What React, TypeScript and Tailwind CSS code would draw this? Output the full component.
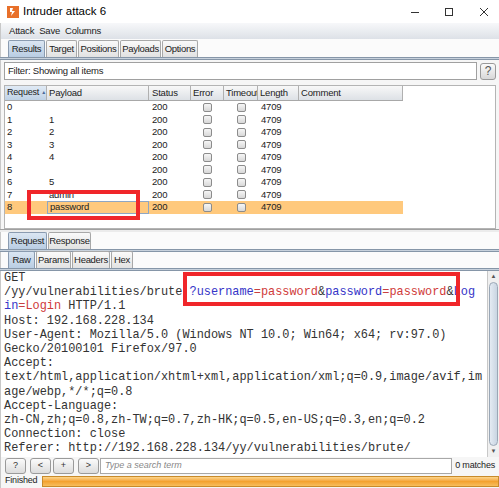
import React from 'react';

const ui = { fontFamily: '"Liberation Sans", Arial, sans-serif' };
const mono = { fontFamily: '"Liberation Mono", "Courier New", monospace' };

const rows = [
  { n: '0', p: '' },
  { n: '1', p: '1' },
  { n: '2', p: '2' },
  { n: '3', p: '3' },
  { n: '4', p: '4' },
  { n: '5', p: '' },
  { n: '6', p: '5' },
  { n: '7', p: 'admin' },
  { n: '8', p: 'password' },
];

function Tab({ label, active, w }: { label: string; active?: boolean; w: string }) {
  return (
    <div
      className={`${w} h-[17px] flex items-center justify-center whitespace-nowrap border border-b-0 rounded-t-[2px] text-[9.5px] tracking-[-0.3px] text-[#222] ${
        active
          ? 'bg-gradient-to-b from-[#dbe6f2] to-[#b9cde3] border-[#8a9bb0]'
          : 'bg-gradient-to-b from-[#fafafa] to-[#e2e2e2] border-[#a8a8a8]'
      }`}
    >
      {label}
    </div>
  );
}

function Box() {
  return <div className="w-[9px] h-[9px] mx-auto rounded-[2px] border border-[#8c8c8c] bg-gradient-to-b from-[#f6f6f6] to-[#d8d8d8]" />;
}

function NavBtn({ label }: { label: string }) {
  return (
    <div className="w-[21px] h-[16px] shrink-0 rounded-[3px] border border-[#9a9a9a] bg-gradient-to-b from-[#fbfbfb] to-[#dcdcdc] flex items-center justify-center text-[9px] leading-none text-[#333]">
      {label}
    </div>
  );
}

export default function App() {
  return (
    <div className="w-[499px] h-[488px] bg-white overflow-hidden flex flex-col text-[#222]" style={ui}>
      {/* title bar */}
      <div className="h-[23px] flex items-center bg-white shrink-0">
        <svg width="12" height="12" viewBox="0 0 12 12" className="ml-[7px]">
          <rect width="12" height="12" fill="#e8702a" />
          <path d="M3 2h3l-1 3h3L4 10l1-4H3z" fill="#fff" />
        </svg>
        <span className="ml-[4px] text-[11.5px] text-black">Intruder attack 6</span>
        <div className="ml-auto flex items-center">
          <svg width="10" height="10" viewBox="0 0 10 10" className="mr-[24px]">
            <path d="M1 5.5h8" stroke="#333" strokeWidth="1" />
          </svg>
          <svg width="10" height="10" viewBox="0 0 10 10" className="mr-[25px]">
            <rect x="1.5" y="1.5" width="7" height="7" fill="none" stroke="#333" strokeWidth="1" />
          </svg>
          <svg width="10" height="10" viewBox="0 0 10 10" className="mr-[10px]">
            <path d="M1 1l8 8M9 1l-8 8" stroke="#333" strokeWidth="1" />
          </svg>
        </div>
      </div>

      {/* menu bar */}
      <div className="h-[16px] shrink-0 flex items-center gap-[5px] pl-[8px] text-[9.5px] tracking-[-0.2px] bg-gradient-to-b from-[#f7f8fa] to-[#dde1e7] border-l border-[#c8c8c8]">
        <span>Attack</span>
        <span>Save</span>
        <span>Columns</span>
      </div>

      {/* main tabs */}
      <div className="h-[18px] shrink-0 flex items-end gap-[1px] pl-[7px] bg-[#fbfbfb] border-l border-[#c8c8c8]">
        <Tab label="Results" active w="w-[37px]" />
        <Tab label="Target" w="w-[31px]" />
        <Tab label="Positions" w="w-[41px]" />
        <Tab label="Payloads" w="w-[41px]" />
        <Tab label="Options" w="w-[36px]" />
      </div>
      <div className="h-[3px] shrink-0 border-t border-b border-[#8696a8] bg-[#c7d1dc]" />

      {/* filter */}
      <div className="h-[22px] shrink-0 flex items-center gap-[3px] px-[3px] bg-[#f6f6f6] border-l border-[#c8c8c8]">
        <div className="h-[18px] flex-1 border border-[#a0a0a0] bg-white flex items-center pl-[3px] text-[9.5px] tracking-[-0.2px]">
          Filter: Showing all items
        </div>
        <div className="w-[16px] h-[17px] rounded-[3px] border border-[#9a9a9a] bg-gradient-to-b from-[#fbfbfb] to-[#d8d8d8] flex items-center justify-center text-[12px] text-[#555]">
          ?
        </div>
      </div>

      {/* table */}
      <div className="h-[147px] shrink-0 bg-[#f6f6f6] border-l border-[#c8c8c8] px-[3px] pt-[3px] flex flex-col">
        <div className="flex-1 border border-[#b4b4b4] bg-white relative overflow-hidden">
          <div className="w-[398px] text-[9.5px] tracking-[-0.2px] whitespace-nowrap">
            <div className="flex h-[15px] items-center border-b border-[#a8a8a8] bg-gradient-to-b from-[#f8f8f8] to-[#dde1e6]">
              <div className="w-[42px] h-full flex items-center pl-[2px] border-r border-[#b0b0b0] bg-gradient-to-b from-[#e0eaf5] to-[#bfd2e6] text-[9px] overflow-hidden">
                Request<span className="ml-[2px] text-[5px] text-[#4a6a9a]">▲</span>
              </div>
              <div className="w-[102px] h-full flex items-center pl-[2px] border-r border-[#b0b0b0]">Payload</div>
              <div className="w-[42px] h-full flex items-center pl-[3px] border-r border-[#b0b0b0]">Status</div>
              <div className="w-[33px] h-full flex items-center pl-[2px] border-r border-[#b0b0b0]">Error</div>
              <div className="w-[34px] h-full flex items-center pl-[2px] border-r border-[#b0b0b0] overflow-hidden">Timeout</div>
              <div className="w-[41px] h-full flex items-center pl-[2px] border-r border-[#b0b0b0]">Length</div>
              <div className="w-[104px] h-full flex items-center pl-[2px] border-r border-[#b0b0b0]">Comment</div>
            </div>
            {rows.map((r, i) => (
              <div key={r.n} className={`flex h-[12.5px] items-center ${i === 8 ? 'bg-[#ffc97d]' : ''}`}>
                <div className="w-[42px] pl-[2px]">{r.n}</div>
                <div
                  className={`w-[102px] h-full flex items-center pl-[2px] ${
                    i === 8 ? 'border border-[#8fa6c2]' : ''
                  }`}
                >
                  {r.p}
                </div>
                <div className="w-[42px] pl-[3px]">200</div>
                <div className="w-[33px]"><Box /></div>
                <div className="w-[34px]"><Box /></div>
                <div className="w-[41px] pl-[3px]">4709</div>
                <div className="w-[104px]" />
              </div>
            ))}
          </div>
          {/* highlight around payload */}
          <div className="absolute left-[22px] top-[104px] w-[113px] h-[30px] border-[4px] border-[#f0262a]" />
        </div>
      </div>
      <div className="h-[3px] shrink-0 border-t border-[#a0a0a0] bg-[#ececec]" />

      {/* request / response tabs */}
      <div className="h-[17px] shrink-0 flex items-end gap-[1px] pl-[7px] bg-[#fbfbfb] border-l border-[#c8c8c8]">
        <Tab label="Request" active w="w-[39px]" />
        <Tab label="Response" w="w-[43px]" />
      </div>
      <div className="h-[3px] shrink-0 border-t border-b border-[#8696a8] bg-[#c7d1dc]" />

      <div className="h-[16px] shrink-0 flex items-end gap-[1px] pl-[7px] bg-[#fbfbfb] border-l border-[#c8c8c8]">
        <Tab label="Raw" active w="w-[27px]" />
        <Tab label="Params" w="w-[35px]" />
        <Tab label="Headers" w="w-[38px]" />
        <Tab label="Hex" w="w-[22px]" />
      </div>
      <div className="h-[3px] shrink-0 border-t border-b border-[#8696a8] bg-[#c7d1dc]" />

      {/* raw text */}
      <div className="h-[186px] shrink-0 flex bg-white border-l border-[#c8c8c8] relative">
        <div className="flex-1 overflow-hidden pl-[3px] text-[11.9px] leading-[14.2px] text-[#333] whitespace-pre" style={mono}>
          <div>GET</div>
          <div>
            /yy/vulnerabilities/brute{' '}
            <span className="text-[#3535c8]">?username</span>
            <span className="text-[#c84040]">=</span>
            <span className="text-[#d03a3a]">password</span>
            <span>&amp;</span>
            <span className="text-[#3535c8]">password</span>
            <span className="text-[#c84040]">=</span>
            <span className="text-[#d03a3a]">password</span>
            <span>&amp;</span>
            <span className="text-[#3535c8]">Log</span>
          </div>
          <div>
            <span className="text-[#3535c8]">in</span>
            <span className="text-[#c84040]">=</span>
            <span className="text-[#d03a3a]">Login</span> HTTP/1.1
          </div>
          <div>Host: 192.168.228.134</div>
          <div>User-Agent: Mozilla/5.0 (Windows NT 10.0; Win64; x64; rv:97.0)</div>
          <div>Gecko/20100101 Firefox/97.0</div>
          <div>Accept:</div>
          <div>text/html,application/xhtml+xml,application/xml;q=0.9,image/avif,im</div>
          <div>age/webp,*/*;q=0.8</div>
          <div>Accept-Language:</div>
          <div>zh-CN,zh;q=0.8,zh-TW;q=0.7,zh-HK;q=0.5,en-US;q=0.3,en;q=0.2</div>
          <div>Connection: close</div>
          <div>Referer: http://192.168.228.134/yy/vulnerabilities/brute/</div>
          <div>
            <span>Cookie: </span>
            <span className="text-[#3535c8]">security</span>=<span className="text-[#d03a3a]">medium</span>;{' '}
            <span className="text-[#3535c8]">PHPSESSID</span>=<span className="text-[#d03a3a]">d1f1d0b62e6c8a7e6cae0</span>
          </div>
        </div>
        {/* scrollbar */}
        <div className="w-[12px] h-full border-l border-[#c8c8c8] bg-[#f0f0f0] flex flex-col">
          <div className="h-[11px] flex items-center justify-center text-[6px] text-[#555]">▲</div>
          <div className="flex-1 mx-[1px] rounded-[5px] border border-[#9aa7b6] bg-gradient-to-r from-[#e4ebf3] to-[#c9d5e2]" />
          <div className="h-[11px] flex items-center justify-center text-[6px] text-[#555]">▼</div>
        </div>
        {/* highlight around params */}
        <div className="absolute left-[182px] top-[1px] w-[277px] h-[34px] border-[4px] border-[#f0262a]" />
      </div>

      {/* search bar */}
      <div className="h-[17px] shrink-0 flex items-center pl-[4px] pr-[3px] bg-[#f6f6f6] border-l border-[#c8c8c8]">
        <NavBtn label="?" />
        <div className="w-[4px] shrink-0" />
        <NavBtn label="<" />
        <div className="w-[2px] shrink-0" />
        <NavBtn label="+" />
        <div className="w-[4px] shrink-0" />
        <NavBtn label=">" />
        <div className="w-[1px] shrink-0" />
        <div className="h-[16px] flex-1 border border-[#a8a8a8] bg-white flex items-center pl-[4px] text-[9px] leading-none italic text-[#888]">
          Type a search term
        </div>
        <span className="w-[44px] shrink-0 text-right text-[9px] leading-none tracking-[-0.2px] pr-[1px] whitespace-nowrap">0 matches</span>
      </div>

      {/* status */}
      <div className="flex-1 flex items-center bg-[#f6f6f6] border-l border-[#c8c8c8] pl-[4px]">
        <span className="w-[37px] text-[9px] tracking-[-0.2px]">Finished</span>
        <div className="flex-1 h-[11px] border border-[#c88a2a] bg-gradient-to-b from-[#fcd58a] via-[#f3a230] to-[#f7be5c]" />
      </div>
    </div>
  );
}
